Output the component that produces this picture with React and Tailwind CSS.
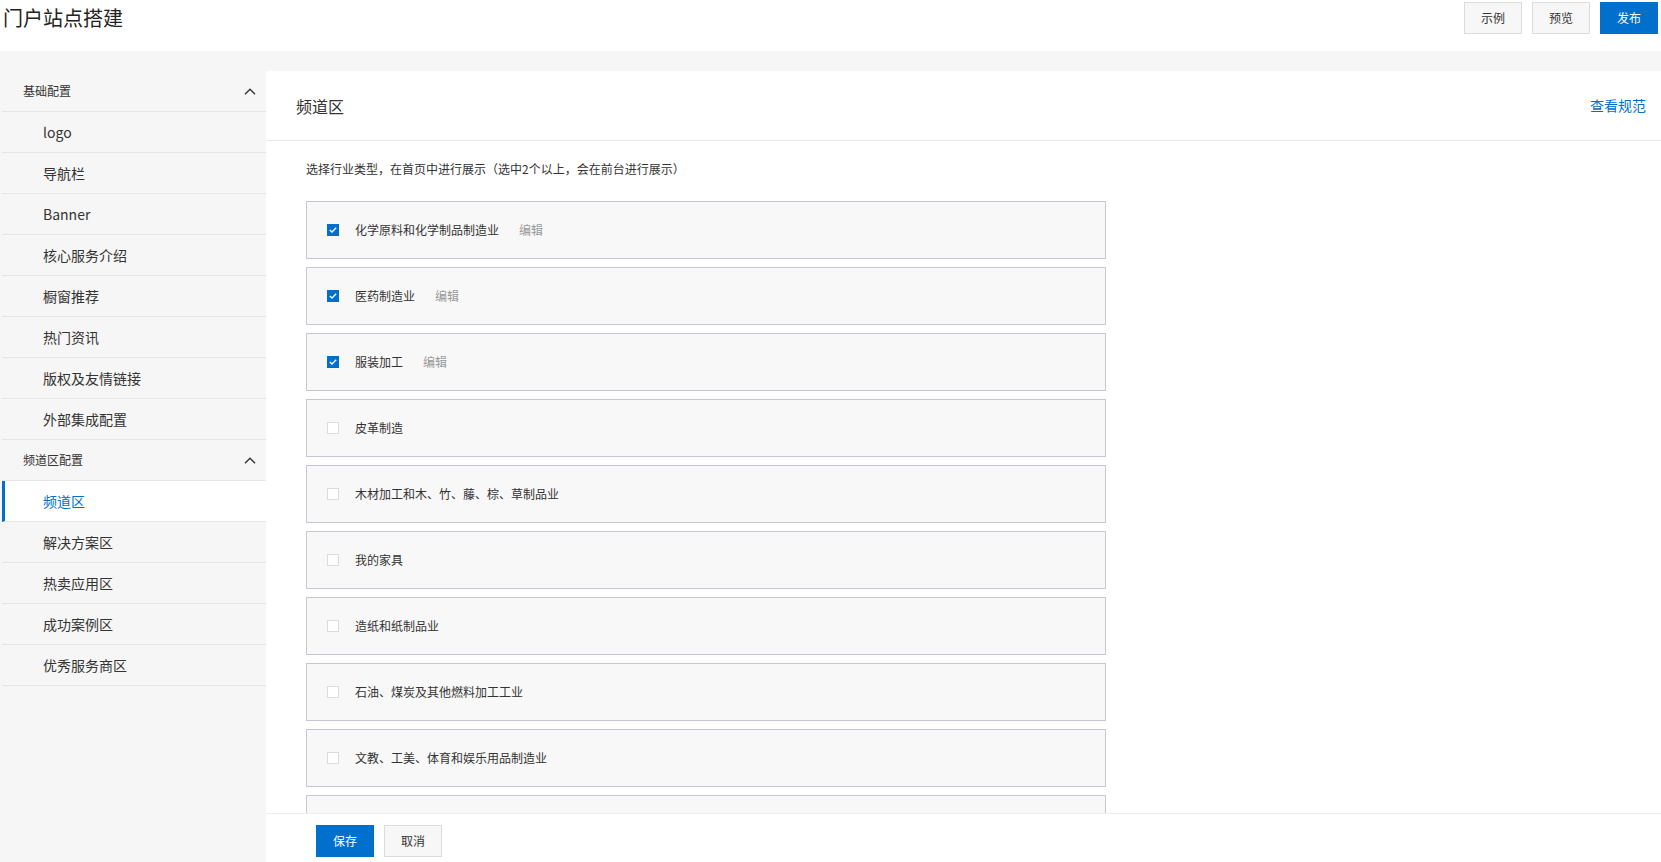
import React from 'react'

const font = { fontFamily: '"Noto Sans CJK SC", "Microsoft YaHei", sans-serif' }

const groups = [
  {
    title: '基础配置',
    items: ['logo', '导航栏', 'Banner', '核心服务介绍', '橱窗推荐', '热门资讯', '版权及友情链接', '外部集成配置'],
  },
  {
    title: '频道区配置',
    items: ['频道区', '解决方案区', '热卖应用区', '成功案例区', '优秀服务商区'],
  },
]

const industries = [
  { name: '化学原料和化学制品制造业', checked: true },
  { name: '医药制造业', checked: true },
  { name: '服装加工', checked: true },
  { name: '皮革制造', checked: false },
  { name: '木材加工和木、竹、藤、棕、草制品业', checked: false },
  { name: '我的家具', checked: false },
  { name: '造纸和纸制品业', checked: false },
  { name: '石油、煤炭及其他燃料加工工业', checked: false },
  { name: '文教、工美、体育和娱乐用品制造业', checked: false },
]

const ChevronUp = () => (
  <svg width="12" height="7" viewBox="0 0 12 7" fill="none">
    <path d="M1 6.2 6 1.2l5 5" stroke="#333" strokeWidth="1.4" />
  </svg>
)

const Checkbox = ({ checked }) =>
  checked ? (
    <span className="w-[12px] h-[12px] bg-[#0070cc] flex items-center justify-center shrink-0">
      <svg width="8" height="6" viewBox="0 0 8 6" fill="none">
        <path d="M0.8 3 3 5 7.2 0.8" stroke="#fff" strokeWidth="1.4" />
      </svg>
    </span>
  ) : (
    <span className="w-[12px] h-[12px] bg-white border border-[#dcdcdc] shrink-0" />
  )

const Sidebar = () => (
  <div className="w-[266px] shrink-0 pl-[2px]">
    {groups.map((g) => (
      <div key={g.title}>
        <div className="h-[41px] flex items-center justify-between pl-[21px] pr-[10px] border-b border-[#e6e6e6] text-[12px] text-[#333]">
          <span>{g.title}</span>
          <ChevronUp />
        </div>
        {g.items.map((it) => {
          const active = it === '频道区'
          return (
            <div
              key={it}
              className={
                active
                  ? 'h-[41px] flex items-center pl-[38px] border-l-[3px] border-l-[#0070cc] border-b border-b-[#e6e6e6] bg-white text-[14px] text-[#0070cc]'
                  : 'h-[41px] flex items-center pl-[41px] border-b border-[#e6e6e6] text-[14px] text-[#333]'
              }
            >
              {it}
            </div>
          )
        })}
      </div>
    ))}
  </div>
)

export default function App() {
  return (
    <div className="w-full h-[862px] flex flex-col overflow-hidden bg-white" style={font}>
      <div className="h-[51px] shrink-0 flex justify-between">
        <div className="pl-[3px] pt-[4px] text-[20px] leading-[28px] text-[#222]">门户站点搭建</div>
        <div className="flex gap-[10px] pr-[3px] pt-[2px]">
          <button className="w-[58px] h-[32px] bg-[#f7f7f7] border border-[#dcdcdc] text-[12px] text-[#333]">示例</button>
          <button className="w-[58px] h-[32px] bg-[#f7f7f7] border border-[#dcdcdc] text-[12px] text-[#333]">预览</button>
          <button className="w-[58px] h-[32px] bg-[#0070cc] text-[12px] text-white">发布</button>
        </div>
      </div>

      <div className="flex-1 min-h-0 bg-[#f6f6f6] pt-[20px] flex">
        <Sidebar />
        <div className="flex-1 min-w-0 bg-white flex flex-col">
          <div className="h-[70px] shrink-0 flex items-center justify-between pl-[30px] pr-[15px] border-b border-[#e8e8e8]">
            <span className="text-[16px] text-[#333]">频道区</span>
            <span className="text-[14px] text-[#0070cc]">查看规范</span>
          </div>
          <div className="flex-1 min-h-0 overflow-hidden pl-[40px] pt-[20px]">
            <p className="text-[12px] leading-[16px] text-[#333] mb-[24px]">
              选择行业类型，在首页中进行展示（选中2个以上，会在前台进行展示）
            </p>
            <div className="flex flex-col gap-[8px]">
              {industries.map((ind) => (
                <div
                  key={ind.name}
                  className="w-[800px] h-[58px] shrink-0 flex items-center pl-[20px] bg-[#f8f8f8] border border-[#c4c8d0] text-[12px]"
                >
                  <Checkbox checked={ind.checked} />
                  <span className="ml-[16px] text-[#333]">{ind.name}</span>
                  {ind.checked && <span className="ml-[20px] text-[#999]">编辑</span>}
                </div>
              ))}
              {/* next row, scrolled out of view */}
              <div className="w-[800px] h-[58px] shrink-0 bg-[#f8f8f8] border border-[#c4c8d0]" />
            </div>
          </div>
          <div className="h-[49px] shrink-0 border-t border-[#eeeeee] flex gap-[10px] pl-[50px] pt-[11px]">
            <button className="w-[58px] h-[32px] bg-[#0070cc] text-[12px] text-white">保存</button>
            <button className="w-[58px] h-[32px] bg-[#f7f7f7] border border-[#dcdcdc] text-[12px] text-[#333]">取消</button>
          </div>
        </div>
      </div>
    </div>
  )
}
